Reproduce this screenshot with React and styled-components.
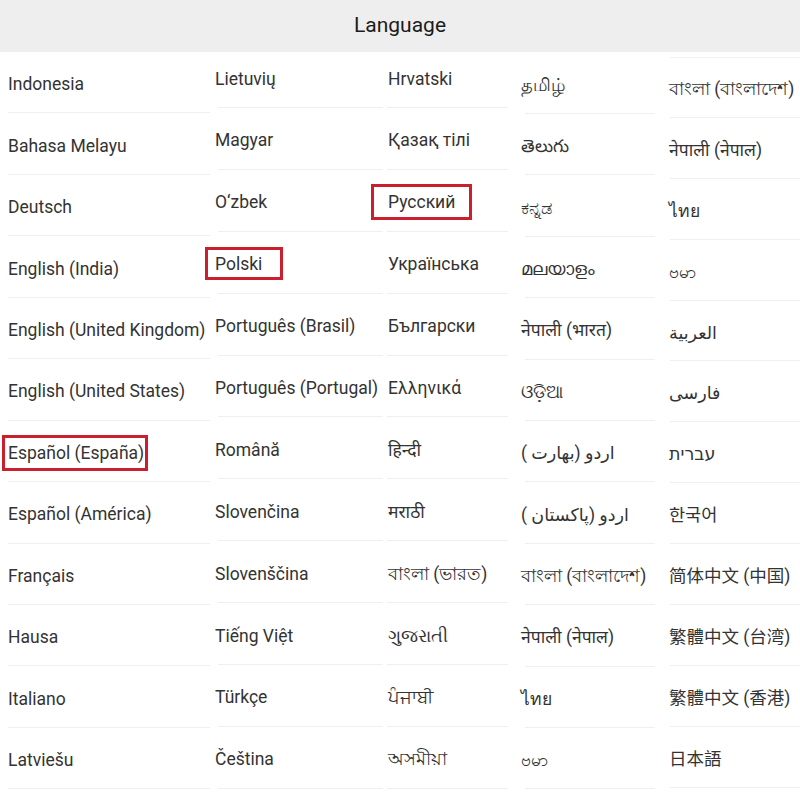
import styled, { createGlobalStyle } from "styled-components";

const GlobalStyle = createGlobalStyle`
  html, body {
    margin: 0;
    padding: 0;
    background: #fff;
  }
  body {
    font-family: Roboto, "Noto Sans", "DejaVu Sans", "Noto Sans CJK SC", sans-serif;
    color: #333;
    overflow: hidden;
  }
`;

// each column was captured separately, so they sit slightly off from one another
const columns = [
  {
    width: 212, lineL: 8, lineR: 2, indent: 0, shift: 0, rowH: 61.45,
    items: [
      "Indonesia", "Bahasa Melayu", "Deutsch", "English (India)",
      "English (United Kingdom)", "English (United States)",
      { text: "Español (España)", box: { t: 8, r: 4, b: 8, l: 6 } },
      "Español (América)", "Français", "Hausa", "Italiano", "Latviešu",
    ],
  },
  {
    width: 171, lineL: 6, lineR: 0, indent: -3, shift: -5.9, rowH: 61.9,
    items: [
      "Lietuvių", "Magyar", "O‘zbek",
      { text: "Polski", box: { t: 7, r: 21, b: 6, l: 10 } },
      "Português (Brasil)", "Português (Portugal)", "Română", "Slovenčina",
      "Slovenščina", "Tiếng Việt", "Türkçe", "Čeština",
    ],
  },
  {
    width: 130, lineL: 4, lineR: 5, indent: 1, shift: -5.9, rowH: 61.9,
    items: [
      "Hrvatski", "Қазақ тілі",
      { text: "Русский", box: { t: 8, r: 17, b: 8, l: 17 } },
      "Українська", "Български", "Ελληνικά", "हिन्दी", "मराठी",
      "বাংলা (ভারত)", "ગુજરાતી", "ਪੰਜਾਬੀ", "অসমীয়া",
    ],
  },
  {
    width: 147, lineL: 12, lineR: 5, indent: -4, shift: 0.6, rowH: 61.4,
    items: [
      "தமிழ்", "తెలుగు", "ಕನ್ನಡ", "മലയാളം", "नेपाली (भारत)", "ଓଡ଼ିଆ",
      "اردو (بھارت )", "اردو (پاکستان )", "বাংলা (বাংলাদেশ)", "नेपाली (नेपाल)",
      "ไทย", "ဗမာ",
    ],
  },
  {
    width: 140, lineL: 10, lineR: 0, indent: -1, shift: 5, rowH: 60.9, topLine: true,
    items: [
      "বাংলা (বাংলাদেশ)", "नेपाली (नेपाल)", "ไทย", "ဗမာ", "العربية", "فارسی",
      "עברית", "한국어", "简体中文 (中国)", "繁體中文 (台湾)", "繁體中文 (香港)", "日本語",
    ],
  },
];

export default function App() {
  return (
    <>
      <GlobalStyle />
      <Page>
        <Header>Language</Header>
        <Grid>
          {columns.map((col, i) => (
            <Column
              key={i}
              $width={col.width}
              $lineL={col.lineL}
              $lineR={col.lineR}
              $shift={col.shift}
              $topLine={col.topLine}
            >
              {col.items.map((item, j) => {
                const text = typeof item === "string" ? item : item.text;
                const box = typeof item === "string" ? null : item.box;
                return (
                  <Cell key={j} $h={col.rowH}>
                    <Label $indent={col.indent} $box={box}>
                      {text}
                    </Label>
                  </Cell>
                );
              })}
            </Column>
          ))}
        </Grid>
      </Page>
    </>
  );
}

const Page = styled.div`
  width: 800px;
  height: 800px;
  overflow: hidden;
  background: #fff;
`;

const Header = styled.div`
  position: relative;
  z-index: 1;
  height: 52px;
  background: #eeeeee;
  display: flex;
  align-items: center;
  justify-content: center;
  padding-bottom: 3px;
  box-sizing: border-box;
  font-family: Roboto, "Noto Sans", sans-serif;
  font-size: 21px;
  color: #1c1c1c;
`;

const Grid = styled.div`
  display: flex;
  align-items: flex-start;
`;

const Column = styled.div`
  width: ${(p) => p.$width}px;
  flex-shrink: 0;
  box-sizing: border-box;
  padding: 0 ${(p) => p.$lineR}px 0 ${(p) => p.$lineL}px;
  margin-top: ${(p) => p.$shift}px;
  display: flex;
  flex-direction: column;
  ${(p) => p.$topLine && `
    > div:first-child {
      border-top: 1px solid #f1f1f1;
    }
  `}
`;

const Cell = styled.div`
  height: ${(p) => p.$h}px;
  flex-shrink: 0;
  box-sizing: border-box;
  border-bottom: 1px solid #efefef;
  display: flex;
  align-items: center;
  padding-top: 4px;
  white-space: nowrap;
`;

const Label = styled.span`
  position: relative;
  display: inline-block;
  margin-left: ${(p) => p.$indent}px;
  font-size: 17.5px;
  line-height: 20px;
  unicode-bidi: plaintext;
  text-align: left;
  color: #333;

  ${(p) =>
    p.$box &&
    `
    &::after {
      content: "";
      position: absolute;
      top: -${p.$box.t}px;
      right: -${p.$box.r}px;
      bottom: -${p.$box.b}px;
      left: -${p.$box.l}px;
      border: 3px solid #cc1f2d;
    }
  `}
`;
